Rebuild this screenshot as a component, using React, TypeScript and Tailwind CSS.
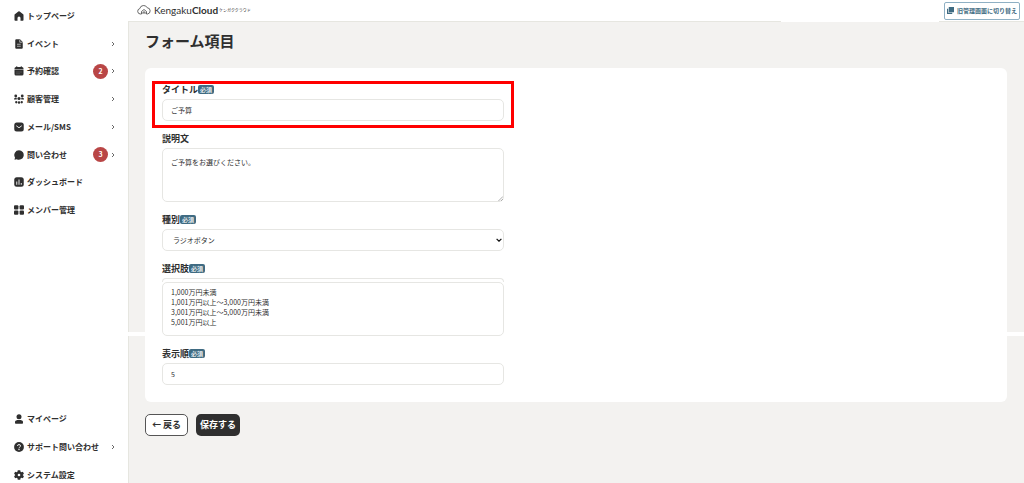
import type { ReactNode } from "react";

type NavEntry = { label: string; icon: ReactNode; count?: number; more?: boolean };

const mainNav: NavEntry[] = [
  { label: "トップページ", icon: <path d="M10 0.500a2 2 0 011.300.5l7 5.500A2 2 0 0119 8v10a1.500 1.500 0 01-1.500 1.500H13V14a3 3 0 00-6 0v5.500H2.500A1.500 1.500 0 011 18V8a2 2 0 01.7-1.500l7-5.500A2 2 0 0110 .5z" /> },
  {
    label: "イベント",
    more: true,
    icon: (
      <>
        <path d="M4.500 0.500H12l5.500 5.500v11.500a2 2 0 01-2 2h-11a2 2 0 01-2-2v-15a2 2 0 012-2z" />
        <path d="M11.500 1.500V6.500H17M6 10.500h7.500M6 14.500h7.500" stroke="#fff" strokeWidth="1.200" fill="none" />
      </>
    ),
  },
  {
    label: "予約確認",
    count: 2,
    more: true,
    icon: (
      <>
        <path d="M4 2h12a3 3 0 013 3v2H1V5a3 3 0 013-3zM1 8h18v8a3 3 0 01-3 3H4a3 3 0 01-3-3z" />
        <path d="M5.500 0.500v3M14.500 0.500v3" stroke="#2f2f2f" strokeWidth="2" />
        <path d="M5 12h2M9 12h2M13 12h2M5 15.500h2M9 15.500h2" stroke="#999" strokeWidth="1.200" />
      </>
    ),
  },
  {
    label: "顧客管理",
    more: true,
    icon: (
      <>
        <circle cx="3.500" cy="4" r="2.800" />
        <circle cx="16.500" cy="4" r="2.800" />
        <circle cx="10" cy="9" r="3.200" />
        <circle cx="4.500" cy="16.500" r="2.300" />
        <circle cx="10" cy="17.200" r="2.500" />
        <circle cx="15.500" cy="16.500" r="2.300" />
        <path d="M0 11c0-2 1-3.500 3-3.500h2.500V11zM20 11c0-2-1-3.500-3-3.500h-2.500V11z" />
      </>
    ),
  },
  {
    label: "メール/SMS",
    more: true,
    icon: (
      <>
        <rect x="0.500" y="1" width="19" height="18" rx="5" />
        <path d="M4.500 7.500l5.500 4 5.500-4" stroke="#fff" strokeWidth="1.800" fill="none" />
      </>
    ),
  },
  { label: "問い合わせ", count: 3, more: true, icon: <path d="M10 0.500a9.500 9.500 0 11-4.500 17.900L1 19.500l1-4.500A9.500 9.500 0 0110 0.500z" /> },
  {
    label: "ダッシュボード",
    icon: (
      <>
        <rect x="0.500" y="0.500" width="19" height="19" rx="5" />
        <path d="M5.500 9v6.500M10 5v10.500M14.500 12v3.500" stroke="#fff" strokeWidth="1.800" />
      </>
    ),
  },
  {
    label: "メンバー管理",
    icon: (
      <>
        <rect x="0" y="0.500" width="8.800" height="8.500" rx="2" />
        <rect x="11.200" y="0.500" width="8.800" height="8.500" rx="2" />
        <rect x="0" y="11.200" width="8.800" height="8.500" rx="2" />
        <rect x="11.200" y="11.200" width="8.800" height="8.500" rx="2" />
      </>
    ),
  },
];

const subNav: NavEntry[] = [
  {
    label: "マイページ",
    icon: (
      <>
        <circle cx="10" cy="5.500" r="5" />
        <path d="M2 18v-2c0-3 3-4 8-4s8 1 8 4v2a1.500 1.500 0 01-1.500 1.500h-13A1.500 1.500 0 012 18z" />
      </>
    ),
  },
  {
    label: "サポート問い合わせ",
    more: true,
    icon: (
      <>
        <circle cx="10" cy="10" r="9.800" />
        <path d="M7 8a3 3 0 116 0c0 2-3 2-3 4.500" stroke="#fff" strokeWidth="1.800" fill="none" />
        <circle cx="10" cy="15" r="1.300" fill="#fff" />
      </>
    ),
  },
  {
    label: "システム設定",
    icon: (
      <>
        <path d="M7.500 0.500h5l.6 2.800 1.900 1.100 2.800-.9 2 4-2.100 1.900v1.200l2.100 1.900-2 4-2.800-.9-1.900 1.100-.6 2.800h-5l-.6-2.800L5 15.600l-2.800.9-2-4 2.100-1.900V9.400L.2 7.500l2-4 2.800.9 1.900-1.100z" />
        <circle cx="10" cy="10" r="2.600" fill="#fff" />
      </>
    ),
  },
];

function NavItem({ item }: { item: NavEntry }) {
  return (
    <li>
      <a href="#" className="flex h-full items-center gap-[3px] pl-[14px] pr-[13px]">
        <svg viewBox="0 0 20 20" fill="#2f2f2f" className="size-[10px] shrink-0">{item.icon}</svg>
        <span className="flex-1 whitespace-nowrap text-[8px] font-bold leading-3">{item.label}</span>
        {item.count && (
          <span className="flex size-[15px] items-center justify-center rounded-full bg-[#b94646] text-[7px] font-bold text-white">
            {item.count}
          </span>
        )}
        {item.more && (
          <svg viewBox="0 0 4 6" className="h-[6px] w-1 shrink-0" fill="none" stroke="#444">
            <path d="M1 1l2 2-2 2" strokeWidth="0.800" />
          </svg>
        )}
      </a>
    </li>
  );
}

function Field({ id, label, required, children }: { id: string; label: string; required?: boolean; children: ReactNode }) {
  return (
    <div className="flex flex-col gap-[3px]">
      <label htmlFor={id} className="flex h-[13px] items-center text-[9px] font-bold leading-3">
        {label}
        {required && (
          <span className="flex h-[9px] w-4 items-center justify-center rounded-xs bg-[#3f6b82] text-[6px] font-medium leading-none text-white">
            必須
          </span>
        )}
      </label>
      {children}
    </div>
  );
}

const control = "block w-full rounded-[5px] border border-[#e6e6e3] bg-white px-2 text-[7px] text-[#2f2f2f]";

export default function App() {
  return (
    <div className="flex h-screen overflow-hidden bg-white font-['Noto_Sans_CJK_JP',sans-serif] text-[#2f2f2f]">
      <nav className="flex w-32 shrink-0 flex-col overflow-hidden pt-[2px]">
        <ul className="grid h-[222px] shrink-0 auto-rows-fr">
          {mainNav.map((item) => <NavItem key={item.label} item={item} />)}
        </ul>
        <ul className="mt-auto grid h-[78px] shrink-0 auto-rows-[28px]">
          {subNav.map((item) => <NavItem key={item.label} item={item} />)}
        </ul>
      </nav>

      <div className="relative flex min-w-0 flex-1 flex-col">
        <header className="shrink-0 bg-white">
          <div className="flex h-[21px] items-center justify-between pl-[9px] pr-1">
            <a href="#" className="flex items-center pb-[2px]">
              <svg viewBox="0 0 28 20" className="h-[10px] w-[14px]" fill="none" stroke="#444" strokeWidth="1.600">
                <path d="M9 18H6.500A5.500 5.500 0 015.500 7.200 8 8 0 0120.500 5.500 6.300 6.300 0 0121 18h-2" />
                <path d="M9 18v-5l5-4 5 4v5M12 18v-4h4v4" />
              </svg>
              <span className="ml-[3px] font-['Lato',sans-serif] text-[10px] leading-3">
                Kengaku<b>Cloud</b>
              </span>
              <span className="ml-px text-[4px] leading-3">ケンガククラウド</span>
            </a>
            <button className="flex h-[18px] w-[76px] items-center justify-center gap-[3px] whitespace-nowrap rounded-xs border border-[#8fb0c4] bg-white text-[6px] font-bold text-[#3f6b82]">
              <svg viewBox="0 0 12 12" className="size-[7px] shrink-0" fill="#3f6b82">
                <path d="M3 0h9v9H3zM0 3h2v7h7v2H0z" />
              </svg>
              旧管理画面に切り替え
            </button>
          </div>
          <div className="flex h-px">
            <span className="flex-1 bg-[#e6e6e0]" />
            <span className="w-[158px]" />
            <span className="w-[85px] bg-[#e6e6e0]" />
          </div>
        </header>

        <main className="relative flex-1 border-l border-[#e6e6e0] bg-[#f3f2f0] pl-4 pr-[17px]">
          {/* seam across the page, behind the card */}
          <div className="absolute top-[310px] -left-px right-0 h-1 bg-white" />
          <h1 className="pt-2 text-[15px] font-bold leading-[22px]">フォーム項目</h1>

          <form className="relative mt-4">
            <div className="rounded-md bg-white px-[17px] pb-[17px] pt-[15px]">
              <div className="flex max-w-[342px] flex-col gap-[11px]">
                <div className="relative">
                  <Field id="title" label="タイトル" required>
                    <input id="title" defaultValue="ご予算" className={`${control} h-[22px]`} />
                  </Field>
                  <div className="pointer-events-none absolute -inset-x-[10px] -bottom-[7px] -top-[2px] border-[3px] border-[#ff0000]" />
                </div>
                <Field id="description" label="説明文">
                  <div className="relative">
                    <textarea
                      id="description"
                      defaultValue="ご予算をお選びください。"
                      className={`${control} h-[54px] resize-none py-[7px] leading-3`}
                    />
                    <svg viewBox="0 0 6 6" className="pointer-events-none absolute bottom-px right-px size-[5px]" stroke="#888">
                      <path d="M0.500 6L6 0.500M3.500 6L6 3.500" strokeWidth="0.800" />
                    </svg>
                  </div>
                </Field>
                <Field id="kind" label="種別" required>
                  <div className="relative">
                    <select id="kind" className={`${control} h-[22px] appearance-none pl-[10px]`}>
                      <option>ラジオボタン</option>
                    </select>
                    <svg viewBox="0 0 10 6" className="pointer-events-none absolute right-[2px] top-[9px] h-1 w-[6px]" fill="none" stroke="#111">
                      <path d="M1 1l4 4 4-4" strokeWidth="2" />
                    </svg>
                  </div>
                </Field>
                <Field id="choices" label="選択肢" required>
                  <div>
                    <div className="h-1 rounded-t-[5px] border border-b-0 border-[#e6e6e3]" />
                    <textarea
                      id="choices"
                      defaultValue={"1,000万円未満\n1,001万円以上～3,000万円未満\n3,001万円以上～5,000万円未満\n5,001万円以上"}
                      className={`${control} h-[54px] resize-none py-1 leading-[10px]`}
                    />
                  </div>
                </Field>
                <Field id="order" label="表示順" required>
                  <input id="order" defaultValue="5" className={`${control} h-[22px]`} />
                </Field>
              </div>
            </div>
            <div className="mt-3 flex gap-2 text-[9px] font-bold">
              <button type="button" className="h-[22px] w-[43px] whitespace-nowrap rounded-[5px] border border-[#555] bg-white">
                ← 戻る
              </button>
              <button type="submit" className="h-[22px] w-11 whitespace-nowrap rounded-[5px] bg-[#2f2f2f] text-white">
                保存する
              </button>
            </div>
          </form>
        </main>
      </div>
    </div>
  );
}
